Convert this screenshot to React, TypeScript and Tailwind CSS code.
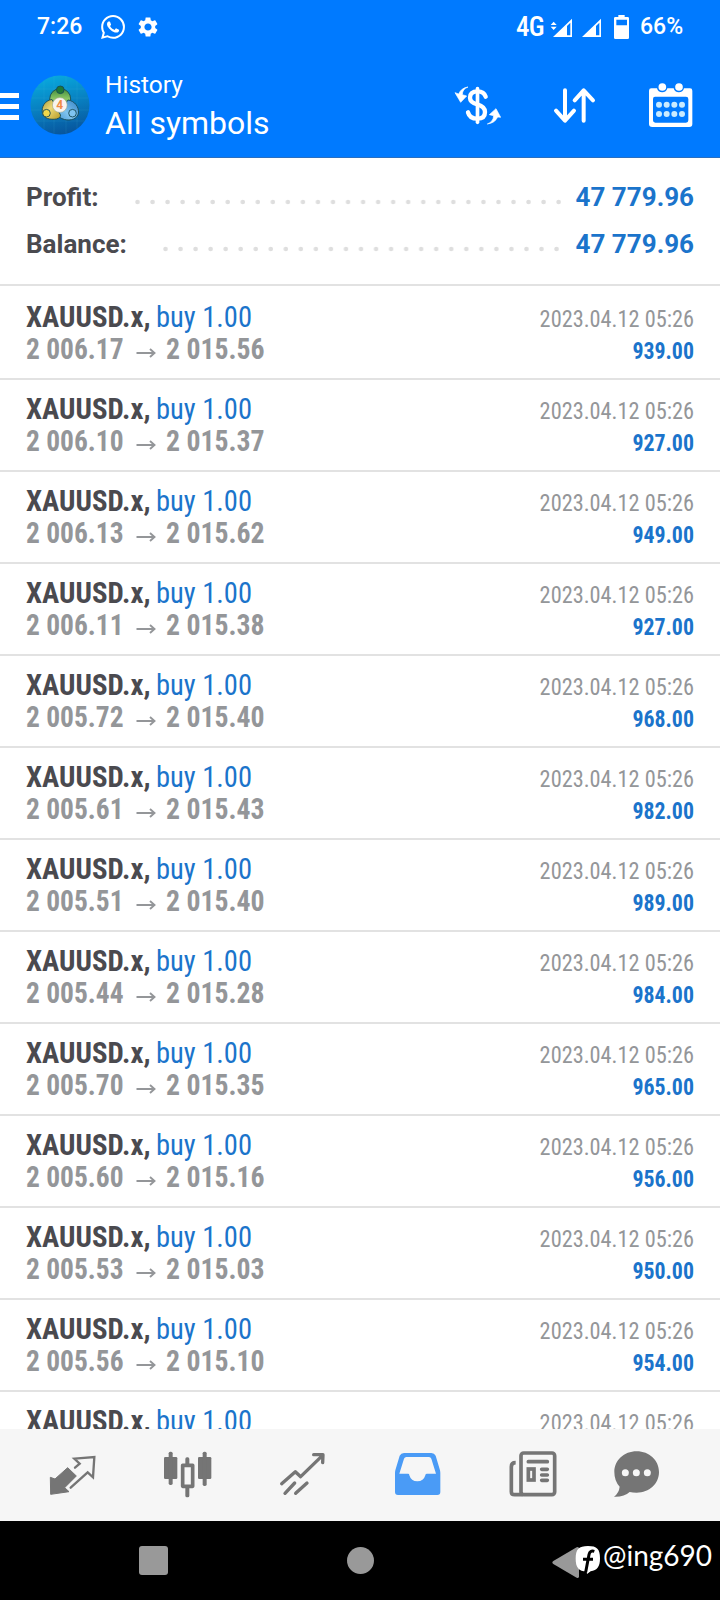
import React from "react";

const cond = "font-['Roboto_Condensed','Roboto',sans-serif]";

type Deal = { open: string; close: string; profit: string };

const deals: Deal[] = [
  { open: "2 006.17", close: "2 015.56", profit: "939.00" },
  { open: "2 006.10", close: "2 015.37", profit: "927.00" },
  { open: "2 006.13", close: "2 015.62", profit: "949.00" },
  { open: "2 006.11", close: "2 015.38", profit: "927.00" },
  { open: "2 005.72", close: "2 015.40", profit: "968.00" },
  { open: "2 005.61", close: "2 015.43", profit: "982.00" },
  { open: "2 005.51", close: "2 015.40", profit: "989.00" },
  { open: "2 005.44", close: "2 015.28", profit: "984.00" },
  { open: "2 005.70", close: "2 015.35", profit: "965.00" },
  { open: "2 005.60", close: "2 015.16", profit: "956.00" },
  { open: "2 005.53", close: "2 015.03", profit: "950.00" },
  { open: "2 005.56", close: "2 015.10", profit: "954.00" },
];

function WhatsApp() {
  return (
    <svg viewBox="0 0 24 24" className="h-[24px] w-[24px] shrink-0" fill="white">
      <path d="M17.472 14.382c-.297-.149-1.758-.867-2.03-.967-.273-.099-.471-.148-.67.15-.197.297-.767.966-.94 1.164-.173.199-.347.223-.644.075-.297-.15-1.255-.463-2.39-1.475-.883-.788-1.48-1.761-1.653-2.059-.173-.297-.018-.458.13-.606.134-.133.298-.347.446-.52.149-.174.198-.298.298-.497.099-.198.05-.371-.025-.52-.075-.149-.669-1.612-.916-2.207-.242-.579-.487-.5-.669-.51-.173-.008-.371-.01-.57-.01-.198 0-.52.074-.792.372-.272.297-1.04 1.016-1.04 2.479 0 1.462 1.065 2.875 1.213 3.074.149.198 2.096 3.2 5.077 4.487.709.306 1.262.489 1.694.625.712.227 1.36.195 1.871.118.571-.085 1.758-.719 2.006-1.413.248-.694.248-1.289.173-1.413-.074-.124-.272-.198-.57-.347m-5.421 7.403h-.004a9.87 9.87 0 01-5.031-1.378l-.361-.214-3.741.982.998-3.648-.235-.374a9.86 9.86 0 01-1.51-5.26c.001-5.45 4.436-9.884 9.888-9.884 2.64 0 5.122 1.03 6.988 2.898a9.825 9.825 0 012.893 6.994c-.003 5.45-4.437 9.884-9.885 9.884m8.413-18.297A11.815 11.815 0 0012.05 0C5.495 0 .16 5.335.157 11.892c0 2.096.547 4.142 1.588 5.945L.057 24l6.305-1.654a11.882 11.882 0 005.683 1.448h.005c6.554 0 11.89-5.335 11.893-11.893a11.821 11.821 0 00-3.48-8.413z" />
    </svg>
  );
}

function Gear() {
  return (
    <svg viewBox="2 2 20 20" className="h-[20px] w-[20px] shrink-0" fill="white">
      <path d="M19.14 12.94c.04-.3.06-.61.06-.94 0-.32-.02-.64-.07-.94l2.03-1.58c.18-.14.23-.41.12-.61l-1.92-3.32c-.12-.22-.37-.29-.59-.22l-2.39.96c-.5-.38-1.03-.7-1.62-.94l-.36-2.54c-.04-.24-.24-.41-.48-.41h-3.84c-.24 0-.43.17-.47.41l-.36 2.54c-.59.24-1.13.57-1.62.94l-2.39-.96c-.22-.08-.47 0-.59.22L2.74 8.87c-.12.21-.08.47.12.61l2.03 1.58c-.05.3-.09.63-.09.94s.02.64.07.94l-2.03 1.58c-.18.14-.23.41-.12.61l1.92 3.32c.12.22.37.29.59.22l2.39-.96c.5.38 1.03.7 1.62.94l.36 2.54c.05.24.24.41.48.41h3.84c.24 0 .44-.17.47-.41l.36-2.54c.59-.24 1.13-.56 1.62-.94l2.39.96c.22.08.47 0 .59-.22l1.92-3.32c.12-.22.07-.47-.12-.61l-2.01-1.58zM12 15.6c-1.98 0-3.6-1.62-3.6-3.6s1.62-3.6 3.6-3.6 3.6 1.62 3.6 3.6-1.62 3.6-3.6 3.6z" />
    </svg>
  );
}

function StatusSignals() {
  return (
    <svg viewBox="390 36 240 84" className="h-[28px] w-[80px] shrink-0" fill="white">
      <path d="M401 62l9 10h-18zM401 87l9-10h-18z" />
      <path d="M456 53v55h-57zM451 65l-10 10v28h10z" fillRule="evenodd" />
      <path d="M543 53v55h-57zM538 65l-10 10v28h10z" fillRule="evenodd" />
      <path d="M595 42h19v6h9q4 0 4 4v58q0 4-4 4h-37q-4 0-4-4V52q0-4 4-4h9zM589 56v17h32V56z" fillRule="evenodd" />
    </svg>
  );
}

function Avatar() {
  return (
    <svg viewBox="0 0 60 60" className="h-[60px] w-[60px] shrink-0">
      <defs>
        <linearGradient id="sky" x1="0.35" y1="0" x2="0.6" y2="1">
          <stop offset="0" stopColor="#08a9dd" />
          <stop offset="0.5" stopColor="#087fc0" />
          <stop offset="1" stopColor="#07549c" />
        </linearGradient>
        <linearGradient id="green" x1="0" y1="0" x2="0" y2="1">
          <stop offset="0" stopColor="#3f8a3c" />
          <stop offset="0.5" stopColor="#8cc766" />
          <stop offset="1" stopColor="#2f7d35" />
        </linearGradient>
        <linearGradient id="gold" x1="0" y1="0" x2="1" y2="1">
          <stop offset="0" stopColor="#a8983a" />
          <stop offset="0.45" stopColor="#ecd974" />
          <stop offset="1" stopColor="#b59a26" />
        </linearGradient>
        <linearGradient id="azure" x1="1" y1="0" x2="0" y2="1">
          <stop offset="0" stopColor="#2f7fc4" />
          <stop offset="0.6" stopColor="#7fc3ee" />
          <stop offset="1" stopColor="#4a9bd6" />
        </linearGradient>
      </defs>
      <circle cx="30" cy="30" r="29.5" fill="url(#sky)" />
      <path d="M6 14h48M2 23h56M1 35h58M5 46h50M14 6v48M24 1v58M36 1v58M47 6v48" stroke="#58c4e8" strokeOpacity="0.18" strokeWidth="0.7" />
      <g stroke="#174b55" strokeWidth="0.9">
        <circle cx="30.2" cy="24" r="10.5" fill="url(#green)" />
        <path d="M38 25c7 1 11 7 10.500 13-1 6-8 8-14 6.500-4-1-6-3-7-5z" fill="url(#azure)" />
        <path d="M22 24.500c-7 1-11 7-9.500 14 1 5 8 6.500 14 5.500 3-1 4-2 4-4z" fill="url(#gold)" />
        <circle cx="30.3" cy="14.8" r="3.8" fill="#1f7a36" />
        <circle cx="16.5" cy="38.2" r="3.8" fill="#f0d84a" />
        <circle cx="42.500" cy="38.2" r="3.8" fill="#7fc4f0" />
      </g>
      <circle cx="29.8" cy="30" r="7.4" fill="#f8f4ee" stroke="#8c9b7c" strokeWidth="0.5" />
      <text x="29.8" y="34.300" textAnchor="middle" fontSize="12" fontWeight="700" fill="#f08a45" className="font-['Roboto',sans-serif]">4</text>
    </svg>
  );
}

function DollarIcon() {
  return (
    <svg viewBox="102 249 141 132" className="h-[44px] w-[47px]" fill="none" stroke="white">
      <path d="M172.500 266v101" strokeWidth="11" strokeLinecap="round" />
      <path d="M197 290q-5-16-24-16-23 0-23 19 0 14 22 20 23 7 23 23 0 20-23 20-23 0-28-19" strokeWidth="13" strokeLinecap="round" />
      <path d="M144 261q-17 6-17 23l13 4-18 19-17-29 11 4q7-18 28-21zM202 372q18-7 19-25l-13-3 20-18 14 26-9-1q-8 18-31 21z" fill="white" strokeWidth="2" strokeLinejoin="round" />
    </svg>
  );
}

function SortIcon() {
  return (
    <svg viewBox="393 249 141 132" className="h-[44px] w-[47px]" fill="none" stroke="white" strokeWidth="12" strokeLinecap="round" strokeLinejoin="round">
      <path d="M435 271v90M408 332l27 30 27-30M491 362v-90M464 301l27-30 28 30" />
    </svg>
  );
}

function CalendarIcon() {
  return (
    <svg viewBox="681 249 141 132" className="h-[44px] w-[47px]" fill="white">
      <path d="M694 265h17a16 16 0 0031 0h19a16 16 0 0031 0h18q7 0 7 7v100q0 9-9 9H697q-10 0-10-9V272q0-7 7-7zM705 290q-6 0-6 7v64q0 7 7 7h92q7 0 7-7v-64q0-7-7-7z" fillRule="evenodd" />
      <circle cx="727" cy="261" r="11.5" />
      <circle cx="777" cy="261" r="11.5" />
      <g fill="#c9ebff">
        {[717, 740, 763, 786].map((x) => (
          <React.Fragment key={x}>
            <circle cx={x} cy="314" r="9" />
            <circle cx={x} cy="342" r="9" />
          </React.Fragment>
        ))}
      </g>
    </svg>
  );
}

function Dots({ width }: { width: string }) {
  return (
    <svg className={`mt-[9px] h-[6px] shrink-0 ${width}`}>
      <defs>
        <pattern id="dot" width="15.04" height="6" patternUnits="userSpaceOnUse">
          <circle cx="2.5" cy="3" r="2.3" fill="#dedede" />
        </pattern>
      </defs>
      <rect width="100%" height="6" fill="url(#dot)" />
    </svg>
  );
}

function DealRow({ deal, first }: { deal: Deal; first?: boolean }) {
  return (
    <div className={`${cond} flex shrink-0 justify-between border-b-2 border-[#e2e2e2] px-[26px] ${first ? "h-[94px] pt-[15px]" : "h-[92px] pt-[13px]"}`}>
      <div className="text-[30px] leading-[32px] whitespace-pre">
        <div className="flex">
          <span className="w-[130px] origin-left scale-x-[0.96] font-bold text-[#4a4a4f]">XAUUSD.x,</span>
          <span className="origin-left scale-x-[0.95] text-[#1b74cb]">buy 1.00</span>
        </div>
        <div className="flex font-bold text-[#949699]">
          <span className="w-[110px] origin-left scale-x-[0.915]">{deal.open}</span>
          <svg viewBox="0 0 20 12" className="mt-[14px] mr-[10px] h-[12px] w-[20px]" fill="none" stroke="#949699" strokeWidth="1.9">
            <path d="M0.500 6h18M14 2l4.500 4-4.500 4" />
          </svg>
          <span className="origin-left scale-x-[0.925]">{deal.close}</span>
        </div>
      </div>
      <div className="text-right text-[24px] leading-[32px]">
        <div className="origin-right scale-x-[0.93] pt-[2px] text-[#949699]">2023.04.12 05:26</div>
        <div className="origin-right scale-x-[0.91] font-bold text-[#1b74cb]">{deal.profit}</div>
      </div>
    </div>
  );
}

const navIcon = "h-[51px] w-[51px]";

function NavBar() {
  return (
    <div className="flex h-[92px] shrink-0 bg-[#f6f6f6] pt-[20px] pl-[15px] *:flex *:justify-center">
      <div className="w-[115px]">
        <svg viewBox="141 237 153 153" className={navIcon} fill="none" stroke="#757575">
          <path d="M151 322l14 5 38-34 26 25-35 35 13 12-55 8z" fill="#757575" strokeWidth="3" strokeLinejoin="round" />
          <path d="M225 293l14-12-16-15 60-5-4 61-16-15-51 46" strokeWidth="7" strokeLinecap="round" />
        </svg>
      </div>
      <div className="w-[115px]">
        <svg viewBox="486 237 153 153" className={navIcon} fill="#757575">
          <rect x="492" y="261" width="40" height="66" rx="4" />
          <rect x="506" y="245" width="12" height="100" rx="5" />
          <rect x="594" y="261" width="40" height="66" rx="4" />
          <rect x="608" y="245" width="12" height="103" rx="5" />
          <rect x="556" y="262" width="12" height="120" rx="5" />
          <rect x="548" y="286" width="30" height="63" fill="#f6f6f6" stroke="#757575" strokeWidth="11" strokeLinejoin="round" />
        </svg>
      </div>
      <div className="w-[115px]">
        <svg viewBox="831 237 153 153" className={navIcon} fill="none" stroke="#757575" strokeWidth="10" strokeLinecap="round" strokeLinejoin="round">
          <path d="M845 341l41-36 16 15 65-63M941 254h28l-1 24M855 370l29-31M887 370l34-31" />
        </svg>
      </div>
      <div className="w-[115px]">
        <svg viewBox="96 237 153 153" className={navIcon} fill="#4a9bf6">
          <path d="M132 249h82q9 0 13 8l13 44q1 4 1 9v56q0 9-9 9H114q-9 0-9-9v-56q0-5 1-9l13-44q4-8 13-8zM139 261q-5 0-7 5l-14 45h27q3 0 3 5a25 25 0 0048 0q0-5 4-5h28l-14-45q-2-5-7-5z" fillRule="evenodd" />
        </svg>
      </div>
      <div className="w-[117px]">
        <svg viewBox="444 237 153 153" className={navIcon} fill="none" stroke="#757575" strokeWidth="11">
          <rect x="483" y="249" width="101" height="125" rx="8" />
          <path d="M467 278q-13 0-13 12v75q0 9 10 9h24" />
          <path d="M505 275h57M545 298h17M545 315h17M545 331h17" strokeLinecap="round" />
          <rect x="505" y="297" width="17" height="33" />
        </svg>
      </div>
      <div className="w-[89px]">
        <svg viewBox="752 237 153 153" className={navIcon} fill="#757575">
          <path d="M829 244c38 0 67 27 67 62s-29 62-67 62q-12 0-21-2-16 15-47 14 15-11 17-30-16-17-16-44c0-35 29-62 67-62z" />
          <g fill="#f6f6f6">
            <circle cx="795" cy="308" r="10.5" />
            <circle cx="828" cy="308" r="10.5" />
            <circle cx="861" cy="308" r="10.5" />
          </g>
        </svg>
      </div>
    </div>
  );
}

export default function App() {
  return (
    <div className="flex h-[1600px] w-[720px] flex-col overflow-hidden bg-white font-['Roboto',sans-serif]">
      <header className="h-[158px] shrink-0 border-b border-[#2a6fc0] bg-[#007aff] text-white">
        <div className="flex h-[54px] items-center pl-[37px] text-[23px] font-medium">
          <span className="w-[64px] pt-[1px]">7:26</span>
          <WhatsApp />
          <span className="w-[13px]" />
          <Gear />
          <span className={`${cond} ml-[358px] w-[34px] text-[27px] tracking-tight`}>4G</span>
          <StatusSignals />
          <span className="ml-[10px] pt-[1px]">66%</span>
        </div>
        <div className="flex">
          <div className="mt-[39px] flex w-[19px] shrink-0 flex-col gap-[6px]">
            <span className="h-[5px] bg-white" />
            <span className="h-[5px] bg-white" />
            <span className="h-[5px] bg-white" />
          </div>
          <div className="mt-[21px] ml-[11px]">
            <Avatar />
          </div>
          <div className="mt-[15px] ml-[15px] w-[349px]">
            <div className="origin-left scale-x-[1.02] text-[24px] leading-[32px]">History</div>
            <div className="text-[32px] leading-[44px]">All symbols</div>
          </div>
          <div className="mt-[29px] flex">
            <DollarIcon />
            <span className="w-[50px]" />
            <SortIcon />
            <span className="w-[49px]" />
            <CalendarIcon />
          </div>
        </div>
      </header>

      <section className="h-[128px] shrink-0 border-b-2 border-[#e2e2e2] px-[26px] pt-[16px] text-[26px] leading-[47px] font-bold">
        <div className="flex items-center">
          <span className="w-[109px] text-[#4a4a4f]">Profit:</span>
          <Dots width="w-[426px]" />
          <span className="ml-auto text-[#1b74cb]">47 779.96</span>
        </div>
        <div className="flex items-center">
          <span className="w-[137px] text-[#4a4a4f]">Balance:</span>
          <Dots width="w-[396px]" />
          <span className="ml-auto text-[#1b74cb]">47 779.96</span>
        </div>
      </section>

      <main className="flex min-h-0 flex-1 flex-col overflow-hidden">
        {deals.map((deal, i) => (
          <DealRow key={i} deal={deal} first={i === 0} />
        ))}
        <DealRow deal={{ open: "", close: "", profit: "" }} />
      </main>

      <NavBar />

      <footer className="flex h-[79px] shrink-0 bg-black pt-[23px] text-white">
        <span className="mt-[2px] ml-[139px] h-[29px] w-[29px] rounded-[3px] bg-[#999]" />
        <span className="mt-[3px] ml-[179px] h-[27px] w-[27px] rounded-full bg-[#999]" />
        <svg viewBox="576 516 150 108" className="ml-[178px] h-[36px] w-[50px]">
          <path d="M580 567l70-41q7-3 7 4v83q0 7-7 4l-70-41q-6-4 0-9z" fill="#999" />
          <path d="M684 522c27 0 36 9 36 37 0 25-8 37-28 39l-11 8-1-8c-24 0-33-12-33-38 0-28 9-38 37-38z" fill="white" />
          <path d="M703 538q-13-4-16 10l-10 53M669 562h30" stroke="black" strokeWidth="9" fill="none" />
        </svg>
        <span className="ml-[1px] font-['Lato',sans-serif] text-[28px] leading-[22px]">@ing690</span>
      </footer>
    </div>
  );
}
